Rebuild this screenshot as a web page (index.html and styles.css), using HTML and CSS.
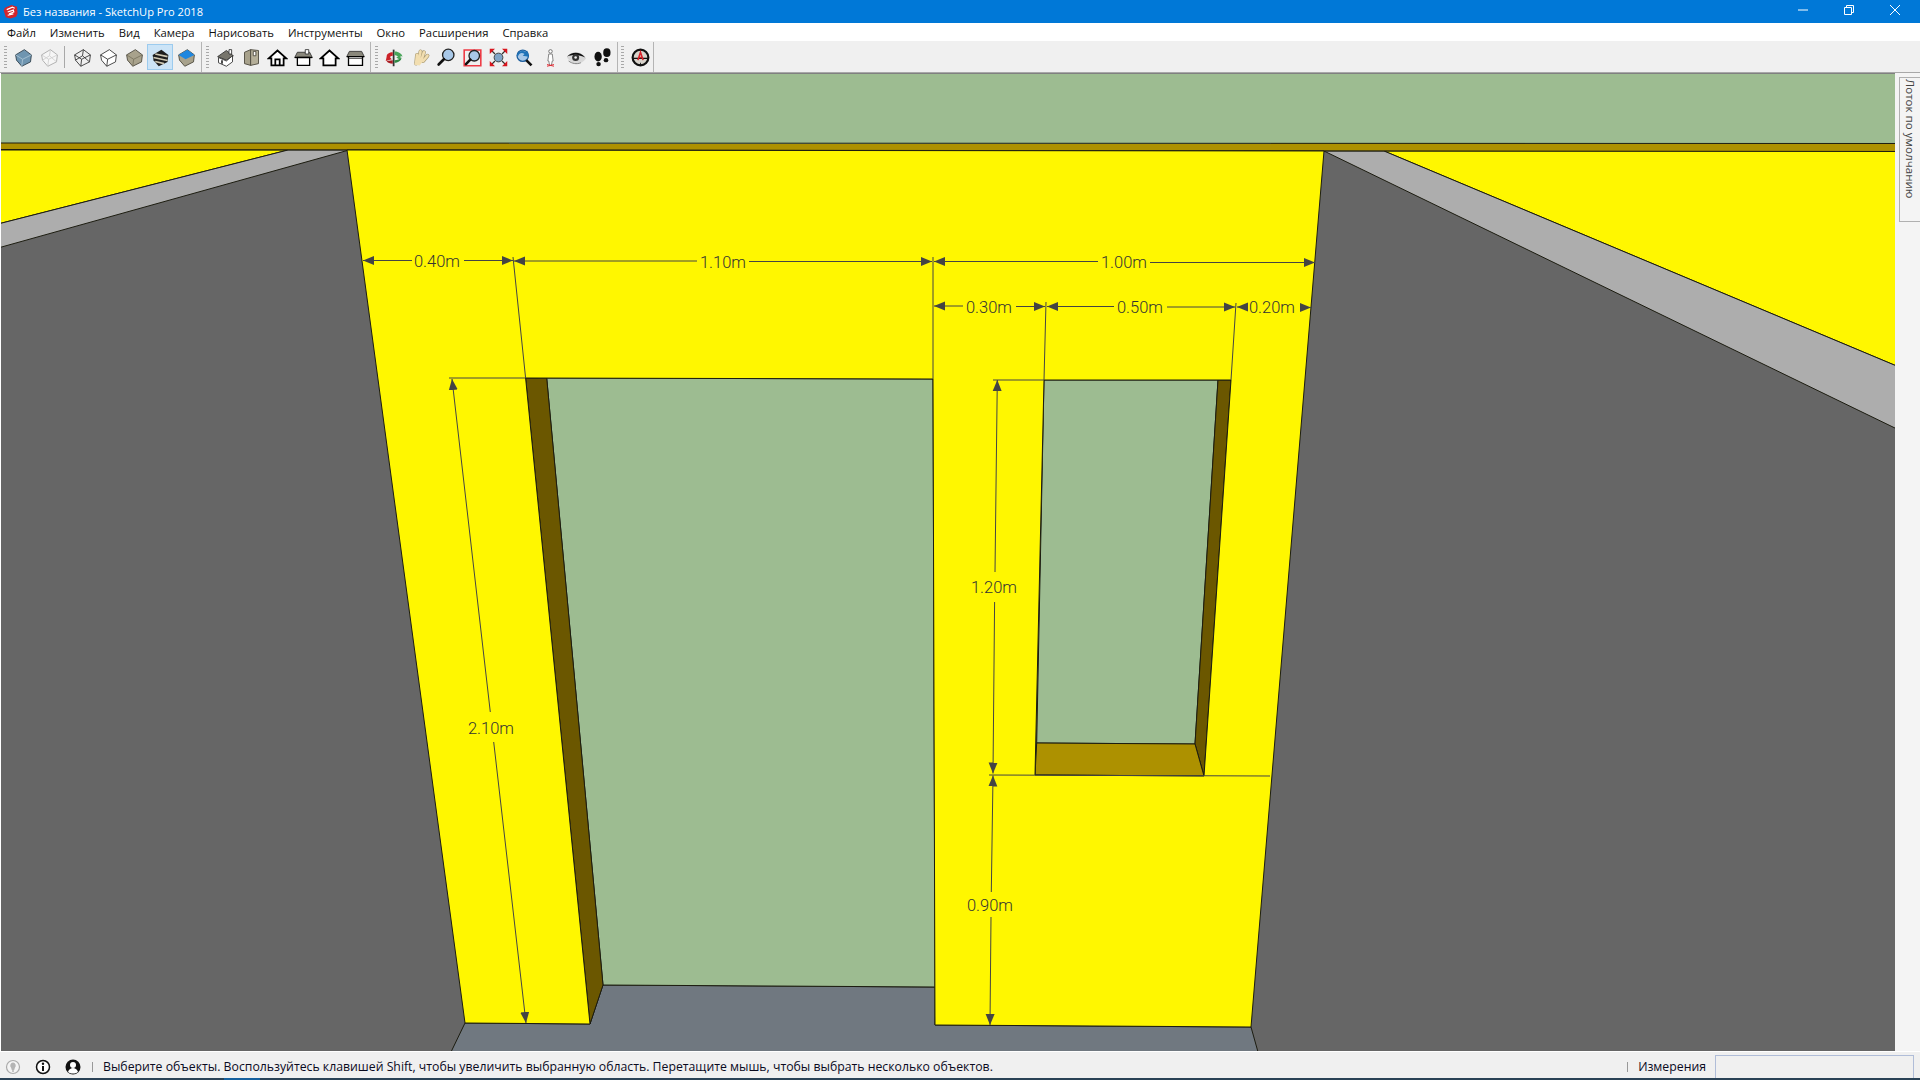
FILE: index.html
```html
<!DOCTYPE html>
<html lang="ru">
<head>
    <meta charset="UTF-8">
    <title>Без названия - SketchUp Pro 2018</title>
    <link rel="stylesheet" href="styles.css">
</head>
<body>
<div class="window">
    <div class="titlebar">
        <svg class="app-icon" viewBox="0 0 16 16">
            <path d="M2 4 9 1l6 2 .5 7-1.500 3.500L8 15.500 3 14 .8 7z" fill="#d3242c"/>
            <path d="M4 6l6-2.500 2.500 1M5 8.500l6-2 .5 2-5 2M5 12l6-1.500" fill="none" stroke="#fff" stroke-width="1.300"/>
        </svg>
        <span class="title-text">Без названия - SketchUp Pro 2018</span>
        <div class="win-controls">
            <span class="win-btn"><svg viewBox="0 0 12 12"><path d="M1 6h10" stroke="#fff"/></svg></span>
            <span class="win-btn"><svg viewBox="0 0 12 12"><path d="M1.500 3.500h7v7h-7zM3.500 3.500v-2h7v7h-2" fill="none" stroke="#fff"/></svg></span>
            <span class="win-btn"><svg viewBox="0 0 12 12"><path d="M1 1l10 10M11 1 1 11" stroke="#fff"/></svg></span>
        </div>
    </div>

    <div class="menubar">
        <span>Файл</span><span>Изменить</span><span>Вид</span><span>Камера</span><span>Нарисовать</span><span>Инструменты</span><span>Окно</span><span>Расширения</span><span>Справка</span>
    </div>

    <div class="toolbar">
        <div class="tool-group">
            <i class="grip"></i>
            <span class="tool"><svg viewBox="0 0 24 24"><path d="M3 9 13 3l8 6-1 8-10 5-6-7z" fill="#6f95b0" stroke="#2f3f4a"/><path d="M3 9l8 5 10-5M11 14l-1 8" fill="none" stroke="#a9c3d4"/></svg></span>
            <span class="tool"><svg viewBox="0 0 24 24"><path d="M3 9 13 3l8 6-1 8-10 5-6-7z" fill="#f6f6f6" stroke="#a8a8a8"/><path d="M3 9l8 5 10-5M11 14l-1 8M13 3l-1 7M4 15l8-5 8 7" fill="none" stroke="#cfcfcf"/></svg></span>
            <i class="tool-sep"></i>
            <span class="tool"><svg viewBox="0 0 24 24"><path d="M3 9 13 3l8 6-1 8-10 5-6-7zM3 9l8 5 10-5M11 14l-1 8M13 3l-1 7M4 15l8-5 8 7" fill="none" stroke="#333"/></svg></span>
            <span class="tool"><svg viewBox="0 0 24 24"><path d="M3 9 13 3l8 6-1 8-10 5-6-7z" fill="#fff" stroke="#333"/><path d="M3 9l8 5 10-5M11 14l-1 8" fill="none" stroke="#333"/></svg></span>
            <span class="tool"><svg viewBox="0 0 24 24"><path d="M3 9 13 3l8 6-1 8-10 5-6-7z" fill="#a8a28c" stroke="#4a473c"/><path d="M3 9l8 5 10-5M11 14l-1 8" fill="none" stroke="#79745f"/></svg></span>
            <span class="tool tool-active"><svg viewBox="0 0 24 24"><path d="M3 9 13 3l8 6-1 8-10 5-6-7z" fill="#1e1e1e"/><path d="M6 8l14 3M4 12l16 3.500M6 16.500l10 2.500" fill="none" stroke="#cfc9b4" stroke-width="1.800"/></svg></span>
            <span class="tool"><svg viewBox="0 0 24 24"><path d="M3 9 13 3l8 6-1 8-10 5-6-7z" fill="#a8a28c" stroke="#4a473c"/><path d="M3 9 13 3l8 6-10 5z" fill="#1f87e0"/></svg></span>
        </div>
        <div class="tool-group">
            <i class="grip"></i>
            <span class="tool"><svg viewBox="0 0 24 24"><path d="M3 11 13 4l8 6-8 5z" fill="#77756c" stroke="#333"/><path d="M16 3h3v5h-3z" fill="#fff" stroke="#333"/><path d="M4 12l9 4 7-6v7l-7 5-9-4z" fill="#fff" stroke="#333"/><path d="M7 15h2v4H7z" fill="#333"/></svg></span>
            <span class="tool"><svg viewBox="0 0 24 24"><path d="M4 6l7-3v18l-7-2z" fill="#a8a28c" stroke="#4a473c"/><path d="M11 3l9 1v15l-9 2z" fill="#b5af99" stroke="#4a473c"/><path d="M14 5h3v5h-3z" fill="#fff" stroke="#4a473c"/></svg></span>
            <span class="tool"><svg viewBox="0 0 24 24"><path d="M12 4 2 13h3v8h14v-8h3z" fill="#fff" stroke="#000" stroke-width="2"/><path d="M9.500 21v-7h5v7" fill="none" stroke="#000" stroke-width="2"/></svg></span>
            <span class="tool"><svg viewBox="0 0 24 24"><path d="M2 12l3-6h14l3 6z" fill="#8a887c" stroke="#333"/><path d="M14 3h4v5h-4z" fill="#fff" stroke="#333"/><path d="M2 12h20" stroke="#000" stroke-width="1.500"/><path d="M5 12h14v9H5z" fill="#fff" stroke="#000" stroke-width="1.500"/></svg></span>
            <span class="tool"><svg viewBox="0 0 24 24"><path d="M12 4 2 13h3v8h14v-8h3z" fill="#fff" stroke="#000" stroke-width="2"/></svg></span>
            <span class="tool"><svg viewBox="0 0 24 24"><path d="M2 11l3-6h14l3 6z" fill="#8a887c" stroke="#333"/><path d="M2 11h20" stroke="#000" stroke-width="1.500"/><path d="M4 11h16v10H4z" fill="#fff" stroke="#000" stroke-width="1.500"/><path d="M4 13h16" stroke="#333"/></svg></span>
        </div>
        <div class="tool-group">
            <i class="grip"></i>
            <span class="tool"><svg viewBox="0 0 24 24"><path d="M11 3v19" stroke="#333" stroke-width="2"/><path d="M3 11c0-3 3-5 7-5v4c-2 0-3 1-3 2l2 2-7 2z" fill="#cc2229"/><path d="M10 15v4c-3 0-6-1-7-3z" fill="#a81c22"/><path d="M12 5c5 0 9 3 9 6l-2-1v5l-5-3 2-1c-1-1-3-2-4-2z" fill="#4aa55a"/><path d="M12 15c3 0 6-1 8-3 0 3-3 6-8 6z" fill="#2f8a45"/></svg></span>
            <span class="tool"><svg viewBox="0 0 24 24"><g fill="none" stroke-linecap="round"><path d="M7 19 8 9M10 15l2-10M13 15l3-9M15 16l5-6M8 18l6-3" stroke="#a89a74" stroke-width="4.400"/><path d="M7 19 8 9M10 15l2-10M13 15l3-9M15 16l5-6M8 18l6-3" stroke="#f2deb0" stroke-width="3"/></g><path d="M5 20l3-8h6l1 4-4 5z" fill="#f2deb0"/></svg></span>
            <span class="tool"><svg viewBox="0 0 24 24"><circle cx="14" cy="9" r="6.500" fill="#a8c8e8" stroke="#222" stroke-width="1.500"/><path d="M9 14l-6 6" stroke="#111" stroke-width="3" stroke-linecap="round"/></svg></span>
            <span class="tool"><svg viewBox="0 0 24 24"><path d="M2.500 3.500h19v18h-19z" fill="none" stroke="#ee3a44" stroke-width="1.800"/><circle cx="14" cy="10" r="6" fill="#a8c8e8" stroke="#222" stroke-width="1.500"/><path d="M9.500 14.500l-5 5" stroke="#111" stroke-width="3" stroke-linecap="round"/></svg></span>
            <span class="tool"><svg viewBox="0 0 24 24"><circle cx="12" cy="12" r="5" fill="#7fa6c8" stroke="#333"/><path d="M8 8 3 3M16 8l5-5M8 16l-5 5M16 16l5 5" stroke="#333" stroke-width="1.500"/><path d="M2 2h6L2 8zM22 2h-6l6 6zM2 22h6l-6-6zM22 22h-6l6-6z" fill="#d8151d"/></svg></span>
            <span class="tool"><svg viewBox="0 0 24 24"><circle cx="10" cy="10" r="6.500" fill="#a8c8e8" stroke="#1c5e9e" stroke-width="1.500"/><path d="M3 10c1-5 7-7 11-4l1-2 2 7-7-1 2-2c-3-2-6-1-7 2z" fill="#1f73b8"/><path d="M14 15l6 6" stroke="#111" stroke-width="3"/></svg></span>
            <span class="tool"><svg viewBox="0 0 24 24"><circle cx="12" cy="5" r="2" fill="#fff" stroke="#666"/><path d="M10 8h4l1 8h-1l-1 5h-2l-1-5H9z" fill="#fff" stroke="#777"/><path d="M8 20l8 2M16 20l-8 2" stroke="#e0222a"/></svg></span>
            <span class="tool"><svg viewBox="0 0 24 24"><path d="M1 12c4-6 9-7 13-6 4 1 7 4 9 7-3 4-7 6-11 6-4 0-8-3-11-7z" fill="#d8d8d8"/><path d="M1 11c5-5 14-7 21 1-6-3-14-4-21-1z" fill="#111"/><circle cx="11" cy="12" r="4" fill="#333"/><circle cx="11" cy="12" r="1.500" fill="#eee"/><path d="M3 16c4 3 9 4 14 2" fill="none" stroke="#777"/></svg></span>
            <span class="tool"><svg viewBox="0 0 24 24"><g fill="#111"><ellipse cx="7" cy="11" rx="4.200" ry="5.500"/><ellipse cx="7.500" cy="19.500" rx="2.600" ry="2.500"/><ellipse cx="17" cy="6.500" rx="4.200" ry="5"/><ellipse cx="16" cy="15" rx="2.600" ry="2.500"/></g></svg></span>
        </div>
        <div class="tool-group">
            <i class="grip"></i>
            <span class="tool"><svg viewBox="0 0 24 24"><circle cx="12" cy="12" r="9" fill="#d8d4cc" stroke="#111" stroke-width="2.500"/><path d="M3 13h18" stroke="#111" stroke-width="1.500"/><path d="M12 3v5M12 18v3" stroke="#111"/><path d="M9 15l3-9 3 9M10 12h4" fill="none" stroke="#d8222a" stroke-width="1.800"/></svg></span>
        </div>
    </div>

    <div class="workspace">
        <svg class="model" viewBox="1 74 1894 977" width="1894" height="977">
            <defs>
                <marker id="tip" markerUnits="userSpaceOnUse" markerWidth="12" markerHeight="10" refX="11" refY="5" orient="auto-start-reverse">
                    <path d="M0 .5 11 5 0 9.500z" fill="#444"/>
                </marker>
            </defs>

            <rect x="0" y="74" width="1900" height="977" fill="#666"/>
            <rect x="0" y="74" width="1900" height="70" fill="#9dbc91"/>

            <!-- side walls seen past the opening -->
            <g class="edge">
                <polygon points="-2,150 288,150 -2,224" fill="#fff700"/>
                <polygon points="288,150 349,150 -2,248 -2,224" fill="#adadad"/>
                <polygon points="1384,151 1899,151 1899,367" fill="#fff700"/>
                <polygon points="1324,151 1384,151 1899,367 1899,430" fill="#adadad"/>
                <polygon points="-2,143 1899,143.500 1899,151.500 -2,149.500" fill="#ad9100"/>
                <polygon points="465,1023 451,1052 1258,1052 1251,1027 935,1025 935,987 603,985 590,1024" fill="#707880"/>
            </g>

            <!-- front wall, door and window -->
            <g class="edge">
                <polygon points="546.700,378 933,379 935,987 603,985" fill="#9dbc91"/>
                <polygon points="525.600,378 546.700,378 603,985 590,1024" fill="#6b5700"/>
                <polygon points="1044,380 1218,380 1195,744 1036.700,743" fill="#9dbc91"/>
                <polygon points="1218,380 1231,380 1204,776 1195,744" fill="#6b5700"/>
                <polygon points="1036.700,743 1195,744 1204,776 1035,775" fill="#ad9100"/>
                <path d="M347 150 1324 151 1251 1027 935 1025 933 379 525.600 378 590 1024 465 1023ZM1044 380 1231 380 1204 776 1035 775Z" fill="#fff700" fill-rule="evenodd"/>
            </g>

            <!-- dimension lines -->
            <g class="dim">
                <path class="ext" d="M513 257 525.600 378M933 257V379M1046 302 1044 380M1236 303 1231 380M449 378H525M993 380H1044M989 775 1270 776"/>
                <line x1="363" y1="260.500" x2="412" y2="260.500" marker-start="url(#tip)"/>
                <line x1="464" y1="260.500" x2="513" y2="260.500" marker-end="url(#tip)"/>
                <line x1="514" y1="261" x2="697" y2="261" marker-start="url(#tip)"/>
                <line x1="749" y1="261.500" x2="932" y2="261.500" marker-end="url(#tip)"/>
                <line x1="934" y1="261.500" x2="1098" y2="261.500" marker-start="url(#tip)"/>
                <line x1="1150" y1="262.500" x2="1315" y2="262.500" marker-end="url(#tip)"/>
                <line x1="934" y1="306" x2="963" y2="306" marker-start="url(#tip)"/>
                <line x1="1016" y1="306.500" x2="1045" y2="306.500" marker-end="url(#tip)"/>
                <line x1="1047" y1="306.500" x2="1114" y2="306.500" marker-start="url(#tip)"/>
                <line x1="1167" y1="307" x2="1235" y2="307" marker-end="url(#tip)"/>
                <line x1="1237" y1="307" x2="1247" y2="307" marker-start="url(#tip)"/>
                <line x1="1301" y1="307.500" x2="1311" y2="307.500" marker-end="url(#tip)"/>
                <line x1="452" y1="379" x2="490.300" y2="712" marker-start="url(#tip)"/>
                <line x1="493.700" y1="742" x2="526" y2="1023" marker-end="url(#tip)"/>
                <line x1="997.300" y1="380" x2="995" y2="572" marker-start="url(#tip)"/>
                <line x1="994.600" y1="602" x2="993" y2="773.500" marker-end="url(#tip)"/>
                <line x1="993" y1="775.500" x2="991.300" y2="892" marker-start="url(#tip)"/>
                <line x1="991" y1="917" x2="990" y2="1025" marker-end="url(#tip)"/>
                <text x="437" y="267">0.40m</text>
                <text x="723" y="268">1.10m</text>
                <text x="1124" y="268">1.00m</text>
                <text x="989" y="313">0.30m</text>
                <text x="1140" y="313">0.50m</text>
                <text x="1272" y="313">0.20m</text>
                <text x="491" y="734">2.10m</text>
                <text x="994" y="593">1.20m</text>
                <text x="990" y="911">0.90m</text>
            </g>
        </svg>
        <div class="tray">
            <div class="tray-tab"><span>Лоток по умолчанию</span></div>
        </div>
    </div>

    <div class="statusbar">
        <div class="status-icons">
            <svg viewBox="0 0 16 16"><circle cx="8" cy="8" r="6.500" fill="#f4f4f4" stroke="#aaa" stroke-width="1.200"/><path d="M8 3.500a3 3 0 0 1 2 5L9.200 11H6.800L6 8.500a3 3 0 0 1 2-5z" fill="#b4b4b4"/><path d="M7 12h2" stroke="#b4b4b4" stroke-width="1.500"/></svg>
            <svg viewBox="0 0 16 16"><circle cx="8" cy="8" r="6.500" fill="#fff" stroke="#111" stroke-width="1.500"/><circle cx="8" cy="4.800" r="1.200" fill="#111"/><path d="M8 7v5" stroke="#111" stroke-width="2"/></svg>
            <svg viewBox="0 0 16 16"><circle cx="8" cy="8" r="7.500" fill="#111"/><circle cx="8" cy="6" r="3" fill="#fff"/><path d="M3 13c1-3 3-4 5-4s4 1 5 4c-3 2-7 2-10 0z" fill="#fff"/></svg>
        </div>
        <i class="status-sep"></i>
        <span class="status-text">Выберите объекты. Воспользуйтесь клавишей Shift, чтобы увеличить выбранную область. Перетащите мышь, чтобы выбрать несколько объектов.</span>
        <i class="status-sep status-sep-right"></i>
        <span class="measure-label">Измерения</span>
        <div class="measure-box"></div>
    </div>
    <div class="taskbar"><i></i></div>
</div>
</body>
</html>
```

FILE: styles.css
```css
* {
    box-sizing: border-box;
}
html, body {
    margin: 0;
    padding: 0;
    overflow: hidden;
}
body {
    font-family: "Open Sans", "Noto Sans", sans-serif;
    font-size: 12px;
    color: #000;
    background: #f0f0f0;
}
i {
    display: block;
}
.window {
    display: flex;
    flex-direction: column;
    width: 1920px;
    height: 1080px;
}

/* title bar */
.titlebar {
    display: flex;
    align-items: center;
    height: 23px;
    background: #0078d7;
    color: #fff;
}
.app-icon {
    width: 15px;
    height: 15px;
    margin-left: 3px;
    flex: none;
}
.title-text {
    margin-left: 5px;
    font-size: 11.1px;
}
.win-controls {
    display: flex;
    margin-left: auto;
    padding: 0 2px 3px 0;
}
.win-btn {
    display: flex;
    justify-content: center;
    width: 46px;
}
.win-btn svg {
    width: 12px;
    height: 12px;
}

/* menu */
.menubar {
    display: flex;
    align-items: center;
    height: 18px;
    background: #fff;
    font-size: 11.27px;
    color: #111;
}
.menubar span {
    padding: 0 7px;
}

/* toolbar */
.toolbar {
    display: flex;
    height: 32px;
    padding-top: 1px;
    border-bottom: 1px solid #a8a8a8;
    background: #f0f0f0;
}
.tool-group {
    display: flex;
    align-items: center;
    padding: 0 2px 0 4px;
    border-right: 1px solid #b4b4b4;
}
.tool-group:last-child {
    padding: 0 0 0 3px;
}
.grip {
    width: 3px;
    height: 22px;
    margin-right: 3px;
    background: repeating-linear-gradient(to bottom, #a8a8a8 0 1px, transparent 1px 3px);
}
.tool {
    display: flex;
    align-items: center;
    justify-content: center;
    width: 26px;
    height: 26px;
    border: 1px solid transparent;
}
.tool svg {
    width: 21px;
    height: 21px;
}
.tool-active {
    background: #cce4f7;
    border-color: #9ccbee;
}
.tool-sep {
    width: 1px;
    height: 22px;
    margin: 0 4px 0 2px;
    background: #a8a8a8;
}

/* model area */
.workspace {
    display: flex;
    flex: 1;
    min-height: 0;
    padding-left: 1px;
    background: #fff;
}
.model {
    display: block;
    flex: none;
    box-sizing: content-box;
    border-top: 1px solid #808080;
}
.edge polygon, .edge path {
    stroke: #1c1c10;
    stroke-width: 1;
}
.dim line, .dim .ext {
    stroke: #444;
    stroke-width: 1;
    fill: none;
}
.dim text {
    font-family: "Roboto", "Liberation Sans", sans-serif;
    font-weight: 300;
    font-size: 16.500px;
    fill: #333;
    text-anchor: middle;
}
.tray {
    flex: 1;
    padding: 4px 0 0 4px;
    background: #f4f4f4;
}
.tray-tab {
    display: flex;
    justify-content: center;
    height: 145px;
    margin-right: -1px;
    padding-top: 1px;
    border: 1px solid #b0b0b0;
}
.tray-tab span {
    writing-mode: vertical-rl;
    font-size: 11.6px;
    color: #444;
}

/* status */
.statusbar {
    display: flex;
    align-items: center;
    height: 27px;
    padding-top: 3px;
    border-top: 1px solid #fff;
    background: #f0f0f0;
    color: #0a0a1e;
    font-size: 12.27px;
}
.status-icons {
    display: flex;
    gap: 14px;
    margin-left: 5px;
}
.status-icons svg {
    width: 16px;
    height: 16px;
}
.status-sep {
    width: 1px;
    height: 10px;
    margin-left: 11px;
    background: #999;
}
.status-text {
    margin-left: 10px;
}
.status-sep-right {
    margin-left: auto;
}
.measure-label {
    margin-left: 10px;
}
.measure-box {
    width: 199px;
    height: 24px;
    margin: 0 6px 0 9px;
    border: 1px solid #b0bdd8;
    border-bottom: 0;
}
.taskbar {
    height: 2px;
    background: #2a4256;
}
.taskbar i {
    width: 36px;
    height: 2px;
    margin-left: 224px;
    background: #15609e;
}
```
